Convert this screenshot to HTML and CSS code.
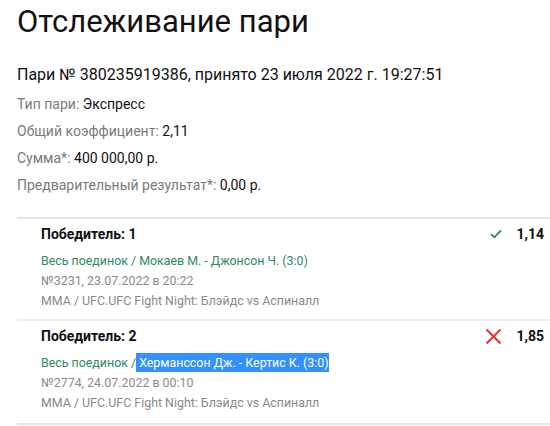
FILE: index.html
```html
<!DOCTYPE html>
<html lang="ru">
<head>
<meta charset="utf-8">
<link rel="stylesheet" href="styles.css">
</head>
<body>
<div class="page">
  <h1 class="title">Отслеживание пари</h1>
  <div class="bet-head">Пари № 380235919386, принято 23 июля 2022 г. 19:27:51</div>
  <ul class="info">
    <li><span class="label">Тип пари:</span> Экспресс</li>
    <li><span class="label">Общий коэффициент:</span> 2,11</li>
    <li><span class="label">Сумма*:</span> 400 000,00 р.</li>
    <li><span class="label">Предварительный результат*:</span> 0,00 р.</li>
  </ul>
  <div class="events">
    <div class="event">
      <div class="event-main">
        <div class="event-title">Победитель: 1</div>
        <div class="event-link">Весь поединок / Мокаев М. - Джонсон Ч. (3:0)</div>
        <div class="event-meta">№3231, 23.07.2022 в 20:22</div>
        <div class="event-meta">MMA / UFC.UFC Fight Night: Блэйдс vs Аспиналл</div>
      </div>
      <div class="event-result">
        <svg class="icon-win" width="12" height="10" viewBox="0 0 12 10"><path d="M1 5.2 L4.3 8.3 L11 1.5" fill="none" stroke="#2e8b5c" stroke-width="1.8"/></svg>
        <span class="odds">1,14</span>
      </div>
    </div>
    <div class="event">
      <div class="event-main">
        <div class="event-title">Победитель: 2</div>
        <div class="event-link">Весь поединок /<span class="selected"> Херманссон Дж. - Кертис К. (3:0)</span></div>
        <div class="event-meta">№2774, 24.07.2022 в 00:10</div>
        <div class="event-meta">MMA / UFC.UFC Fight Night: Блэйдс vs Аспиналл</div>
      </div>
      <div class="event-result">
        <svg class="icon-lose" width="17" height="17" viewBox="0 0 17 17"><path d="M1.5 1.5 L15.5 15.5 M15.5 1.5 L1.5 15.5" fill="none" stroke="#e53b3b" stroke-width="2.2"/></svg>
        <span class="odds">1,85</span>
      </div>
    </div>
  </div>
</div>
</body>
</html>
```
FILE: styles.css
```css
html, body {
  margin: 0;
  padding: 0;
  background: #fff;
}
body {
  font-family: Roboto, "Noto Sans", sans-serif;
  color: #111;
  overflow: hidden;
}
.page {
  padding: 0 0 0 17px;
}
.title {
  margin: 0;
  padding-top: 2px;
  font-size: 31px;
  font-weight: 400;
  line-height: 40px;
  color: #111;
}
.bet-head {
  margin-top: 21px;
  font-size: 16px;
  line-height: 24px;
  color: #111;
}
.info {
  list-style: none;
  margin: 4px 0 0;
  padding: 0;
  font-size: 14px;
  line-height: 27px;
  color: #111;
}
.label {
  color: #7a7a7a;
}
.events {
  margin-top: 18px;
  border-top: 2px solid #e6e6e6;
  border-bottom: 2px solid #e6e6e6;
}
.event {
  display: flex;
  justify-content: space-between;
  padding: 4px 6px 8px 24px;
}
.event:last-child {
  padding-bottom: 10px;
}
.event + .event {
  border-top: 2px solid #efefef;
}
.event-title {
  font-size: 14px;
  font-weight: 700;
  line-height: 22px;
  color: #111;
}
.event-link {
  margin-top: 6px;
  font-size: 12.4px;
  line-height: 20px;
  color: #2e8b5c;
}
.selected {
  background: #3390ff;
  color: #fff;
  padding: 2px 0;
}
.event-meta {
  font-size: 12.4px;
  line-height: 20px;
  color: #8a8a8a;
}
.event-result {
  display: flex;
  align-items: center;
  gap: 14px;
  height: 22px;
}
.odds {
  font-size: 14px;
  font-weight: 700;
  color: #111;
}
```
